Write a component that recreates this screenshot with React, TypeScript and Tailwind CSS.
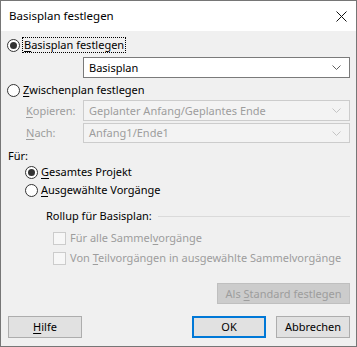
import React from "react";

const FONT = "font-['Noto_Sans','Open_Sans',sans-serif] text-[11px] leading-[16px] whitespace-nowrap";

function Radio({ checked }: { checked?: boolean }) {
    return (
        <span className="w-[13px] h-[13px] rounded-full border border-[#333333] bg-white flex items-center justify-center shrink-0">
            {checked && <span className="w-[7px] h-[7px] rounded-full bg-[#333333]" />}
        </span>
    );
}

function Chevron({ disabled }: { disabled?: boolean }) {
    return (
        <svg width="9" height="5" viewBox="0 0 9 5" className="shrink-0">
            <path d="M0.5 0.5 L4.5 4.5 L8.5 0.5" fill="none" stroke={disabled ? "#c4c4c4" : "#606060"} strokeWidth="1" />
        </svg>
    );
}

function Combo({ value, disabled, h }: { value: string; disabled?: boolean; h: string }) {
    return (
        <div
            className={`${h} w-[267px] flex items-center pl-[5px] pr-[8px] border ${
                disabled ? "border-[#cccccc] bg-[#f3f3f3] text-[#9d9d9d]" : "border-[#7a7a7a] bg-white text-black"
            }`}
        >
            <span className="flex-1">{value}</span>
            <Chevron disabled={disabled} />
        </div>
    );
}

function Check({ children }: { children: React.ReactNode }) {
    return (
        <div className="h-[16px] flex items-center pl-[46px] text-[#9d9d9d]">
            <span className="w-[13px] h-[13px] border border-[#cccccc] bg-[#f7f7f7] shrink-0" />
            <span className="ml-[4px]">{children}</span>
        </div>
    );
}

export default function App() {
    return (
        <div className={`w-[357px] h-[347px] border border-[#767676] bg-[#f0f0f0] flex flex-col text-black ${FONT}`}>
            {/* Title bar */}
            <div className="h-[30px] bg-white flex items-center pl-[8px] pr-[9px] shrink-0">
                <span className="flex-1 text-[11.5px]">Basisplan festlegen</span>
                <svg width="11" height="11" viewBox="0 0 11 11">
                    <path d="M0.5 0.5 L10.5 10.5 M10.5 0.5 L0.5 10.5" stroke="#111" strokeWidth="1" />
                </svg>
            </div>

            <div className="flex flex-col pl-[6px] pr-[6px]">
                {/* Basisplan */}
                <div className="h-[16px] mt-[6px] flex items-center">
                    <Radio checked />
                    <span className="ml-[2px] px-[1px] border border-dotted border-black leading-[14px]">
                        <u className="underline-offset-2">B</u>asisplan festlegen
                    </span>
                </div>
                <div className="mt-[4px] pl-[76px]">
                    <Combo value="Basisplan" h="h-[21px]" />
                </div>

                {/* Zwischenplan */}
                <div className="h-[16px] mt-[4px] flex items-center">
                    <Radio />
                    <span className="ml-[3px]">
                        <u className="underline-offset-2">Z</u>wischenplan festlegen
                    </span>
                </div>
                <div className="mt-[2px] flex items-center">
                    <span className="w-[76px] pl-[19px] text-[#9d9d9d]">
                        <u className="underline-offset-2">K</u>opieren:
                    </span>
                    <Combo value="Geplanter Anfang/Geplantes Ende" disabled h="h-[21px]" />
                </div>
                <div className="mt-[2px] flex items-center">
                    <span className="w-[76px] pl-[19px] text-[#9d9d9d]">
                        <u className="underline-offset-2">N</u>ach:
                    </span>
                    <Combo value="Anfang1/Ende1" disabled h="h-[20px]" />
                </div>

                {/* Für */}
                <div className="h-[16px] mt-[5px] pl-[1px]">Für:</div>
                <div className="h-[16px] flex items-center pl-[18px]">
                    <Radio checked />
                    <span className="ml-[3px]">
                        <u className="underline-offset-2">G</u>esamtes Projekt
                    </span>
                </div>
                <div className="h-[16px] mt-[2px] flex items-center pl-[18px]">
                    <Radio />
                    <span className="ml-[3px]">
                        <u className="underline-offset-2">A</u>usgewählte Vorgänge
                    </span>
                </div>

                {/* Rollup */}
                <div className="h-[16px] mt-[10px] flex items-center pl-[39px]">
                    <span>Rollup für Basisplan:</span>
                    <span className="flex-1 ml-[6px] h-px bg-[#dadada]" />
                </div>
                <div className="mt-[6px]">
                    <Check>
                        Für alle Sammel<u className="underline-offset-2">v</u>orgänge
                    </Check>
                </div>
                <div className="mt-[4px]">
                    <Check>
                        Von <u className="underline-offset-2">T</u>eilvorgängen in ausgewählte Sammelvorgänge
                    </Check>
                </div>

                <div className="mt-[17px] flex justify-end">
                    <div className="w-[133px] h-[21px] bg-[#cccccc] border border-[#bfbfbf] text-[#9d9d9d] flex items-center justify-center">
                        <span>
                            Als <u className="underline-offset-2">S</u>tandard festlegen
                        </span>
                    </div>
                </div>

                {/* Buttons */}
                <div className="mt-[12px] flex items-center pl-[1px]">
                    <div className="w-[74px] h-[22px] bg-[#e1e1e1] border border-[#adadad] flex items-center justify-center">
                        <span>
                            <u className="underline-offset-2">H</u>ilfe
                        </span>
                    </div>
                    <div className="flex-1" />
                    <div className="w-[74px] h-[22px] bg-[#e1e1e1] border-2 border-[#0078d7] flex items-center justify-center">
                        OK
                    </div>
                    <div className="w-[74px] h-[22px] ml-[10px] bg-[#e1e1e1] border border-[#adadad] flex items-center justify-center">
                        Abbrechen
                    </div>
                </div>
            </div>
        </div>
    );
}
